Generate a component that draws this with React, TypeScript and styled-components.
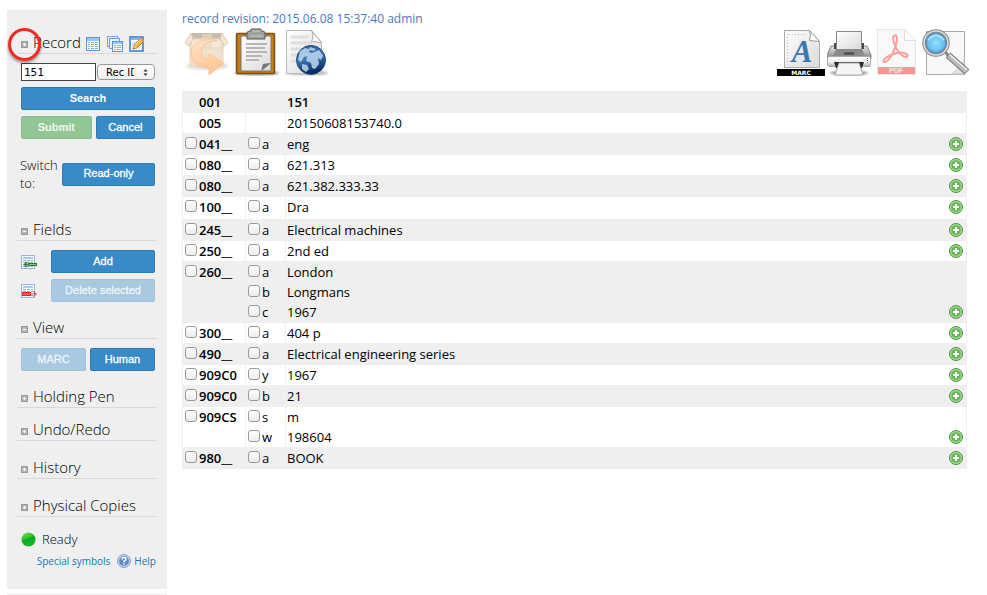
import React from 'react';
import styled, { createGlobalStyle } from 'styled-components';

const GlobalStyle = createGlobalStyle`
  * { box-sizing: border-box; }
  body {
    margin: 0;
    background: #fff;
    color: #000;
    font-family: 'Open Sans', 'Noto Sans', sans-serif;
    font-size: 13px;
  }
  svg { display: block; flex: none; }
`;

const Page = styled.div`
  display: flex;
  align-items: flex-start;
  gap: 15px;
  padding: 10px 20px 0 7px;
`;

const SideColumn = styled.div`
  flex: 0 0 160px;
`;

const Sidebar = styled.aside`
  background: #efefef;
  padding: 20px 10px 19px;
`;

const NextPanel = styled.div`
  height: 1px;
  margin-top: 5px;
  background: #efefef;
`;

const Section = styled.section<{ $gap: number }>`
  margin-bottom: ${(p) => p.$gap}px;
`;

const Heading = styled.header`
  position: relative;
  display: flex;
  align-items: center;
  height: 24px;
  padding-left: 4px;
  border-bottom: 1px solid #d8d8d8;
`;

const Title = styled.h2`
  margin: 0 4px 0 5px;
  font-size: 15px;
  font-weight: 300;
  line-height: 20px;
  white-space: nowrap;
`;

const Toggle = styled.button`
  display: flex;
  margin-top: 6px;
  padding: 0;
  border: 0;
  background: none;
`;

const IconButton = styled.button`
  display: flex;
  padding: 0;
  border: 0;
  background: none;
`;

const HeadingTools = styled.div`
  display: flex;
  gap: 6px;
  padding-top: 5px;
`;

const Marker = styled.span`
  position: absolute;
  left: -9px;
  top: -2px;
  width: 33px;
  height: 33px;
  border: 3px solid #f02a23;
  border-radius: 50%;
  box-shadow: 0 2px 3px rgba(0, 0, 0, 0.4);
  pointer-events: none;
`;

const Controls = styled.div`
  display: flex;
  flex-direction: column;
  gap: 6px;
  padding: 9px 2px 0 4px;
`;

const Row = styled.div<{ $gap?: number }>`
  display: flex;
  align-items: center;
  gap: ${(p) => p.$gap ?? 0}px;
`;

const SearchInput = styled.input`
  width: 75px;
  height: 18px;
  padding: 0 2px;
  border: 1px solid #444;
  border-radius: 0;
  background: #fff;
  font: 11px 'DejaVu Sans Mono', monospace;
`;

const SelectWrap = styled.div`
  position: relative;
  flex: 1;
  svg {
    position: absolute;
    right: 7px;
    top: 5px;
    pointer-events: none;
  }
`;

const Select = styled.select`
  display: block;
  width: 100%;
  height: 16px;
  padding: 0 20px 0 8px;
  appearance: none;
  border: 1px solid #999;
  border-radius: 4px;
  background: linear-gradient(#fff, #f0f0f0);
  color: #000;
  font: 10px 'DejaVu Sans', sans-serif;
`;

const tones = {
  primary: { bg: '#398bc7', edge: '#2d7ab5', fg: '#fff' },
  muted: { bg: '#a9c9e1', edge: '#9fc1db', fg: '#eef5fa' },
  success: { bg: '#92c795', edge: '#8abf8d', fg: '#eef8ee' },
};

const Button = styled.button<{ $tone?: keyof typeof tones; $grow?: number; $strong?: boolean }>`
  flex: ${(p) => p.$grow ?? 1} 1 0;
  height: 23px;
  padding: 0 0 2px;
  border: 1px solid ${(p) => tones[p.$tone ?? 'primary'].edge};
  border-radius: 2px;
  background: ${(p) => tones[p.$tone ?? 'primary'].bg};
  color: ${(p) => tones[p.$tone ?? 'primary'].fg};
  font: ${(p) => (p.$strong ? 'bold' : 'normal')} 11px 'Liberation Sans', Arial, sans-serif;
  -webkit-text-stroke: ${(p) => (p.$strong ? 0 : '0.3px')};
  white-space: nowrap;
`;

const SwitchRow = styled.div`
  display: grid;
  grid-template-columns: 42px 1fr;
  align-items: center;
  margin-top: 17px;
  padding: 0 2px 0 3px;
  line-height: 18px;
  font-weight: 300;
`;

const Status = styled.div`
  display: flex;
  align-items: center;
  gap: 6px;
  padding-left: 4px;
  font-weight: 300;
  line-height: 20px;
`;

const Links = styled.nav`
  display: flex;
  justify-content: flex-end;
  align-items: center;
  margin-top: 3px;
  padding-right: 1px;
  gap: 7px;
  font-size: 10px;
  line-height: 18px;
  a {
    display: flex;
    align-items: center;
    gap: 3px;
    color: #1279c0;
    text-decoration: none;
    white-space: nowrap;
  }
`;

const Main = styled.main`
  flex: 1;
  min-width: 0;
`;

const Revision = styled.a`
  display: block;
  margin-bottom: -2px;
  color: #4a78bf;
  font-size: 12px;
  line-height: 18px;
  text-decoration: none;
`;

const Toolbar = styled.div`
  display: flex;
  justify-content: space-between;
  height: 50px;
  margin: 0 -3px 15px 0;
`;

const ToolGroup = styled.div`
  display: flex;
  gap: 1px;
`;

const RecordTable = styled.table`
  width: 100%;
  border-collapse: collapse;
  border: 1px solid #efefef;
  line-height: 20px;
  td, th {
    padding: 0;
    text-align: left;
    vertical-align: top;
    border: 1px solid #efefef;
  }
  td + td + td { border-right: 0; }
`;

const RecordRow = styled.tr<{ $shade: boolean; $tall?: boolean }>`
  height: ${(p) => (p.$tall ? 23 : 21)}px;
  background: ${(p) => (p.$shade ? '#efefef' : '#fff')};
`;

const TagCell = styled.th`
  width: 63px;
  font-weight: 600;
`;

const CodeCell = styled.td`
  width: 40px;
`;

const CheckLabel = styled.label<{ $inset?: boolean }>`
  display: flex;
  align-items: flex-start;
  height: 20px;
  padding-left: ${(p) => (p.$inset ? 16 : 2)}px;
`;

const Check = styled.input`
  appearance: none;
  width: 12px;
  height: 12px;
  margin: 3px 2px 0 0;
  border: 1px solid #9a9a9a;
  border-radius: 3px;
  background: linear-gradient(#fff, #ececec);
  flex: none;
`;

const Line = styled.div<{ $bold: boolean }>`
  display: flex;
  align-items: center;
  justify-content: space-between;
  height: 20px;
  padding: 0 3px 0 1px;
  font-weight: ${(p) => (p.$bold ? 600 : 400)};
`;

const ToggleIcon = ({ open }: { open: boolean }) => (
  <svg width="7" height="7" viewBox="0 0 7 7" shapeRendering="crispEdges">
    <rect x="0.5" y="0.5" width="6" height="6" fill="#b4b4b4" stroke="#9a9a9a" />
    <path d={open ? 'M2 3.5h3' : 'M2 3.5h3M3.5 2v3'} stroke="#fff" />
  </svg>
);

const TableIcon = () => (
  <svg width="16" height="16" viewBox="0 0 16 16">
    <rect x="1.5" y="1.5" width="13" height="13" fill="#f5fbff" stroke="#5b94d6" />
    <rect x="2" y="2" width="12" height="3" fill="#95c8f2" />
    <path d="M3 6.5h2M6 6.5h3M10 6.5h3M3 8.5h2M6 8.5h3M10 8.5h3M3 10.5h2M6 10.5h3M10 10.5h3M3 12.5h2M6 12.5h3M10 12.5h3" stroke="#8cb0a4" />
  </svg>
);

const CopiesIcon = () => (
  <svg width="16" height="16" viewBox="0 0 16 16">
    <rect x="0.5" y="0.5" width="10" height="10" fill="#e4f2fd" stroke="#7aabdf" />
    <rect x="2.5" y="2.5" width="10" height="10" fill="#e4f2fd" stroke="#6da3dd" />
    <rect x="5.5" y="5.5" width="10" height="10" fill="#f7fcff" stroke="#5b94d6" />
    <path d="M6 7h9" stroke="#95c8f2" strokeWidth="2" />
    <path d="M7 9.5h2M10 9.5h4M7 11.5h2M10 11.5h4M7 13.5h2M10 13.5h4" stroke="#91b3aa" />
  </svg>
);

const EditIcon = () => (
  <svg width="16" height="16" viewBox="0 0 16 16">
    <rect x="1" y="1" width="13" height="14" fill="#f5faff" stroke="#3979c6" strokeWidth="1.5" />
    <path d="M2 3h11" stroke="#82b9ed" strokeWidth="2" />
    <path d="M3 7h6M3 9h4" stroke="#b5cfe8" />
    <path d="M4 13l1-4 7-7 3 3-7 7z" fill="#f7b640" stroke="#a67024" strokeWidth="0.8" />
    <path d="M11 3l3 3 1.5-1.5-3-3z" fill="#ee8a68" />
    <path d="M4 13l1-3.5 2.5 2.5z" fill="#e8d0a8" />
    <path d="M4 13l.5-1.5 1 1z" fill="#333" />
    <path d="M6 9l6-6" stroke="#fde28b" />
  </svg>
);

const FieldIcon = ({ remove = false }: { remove?: boolean }) => (
  <svg width="16" height="16" viewBox="0 0 16 16">
    <rect x="0.5" y="1.5" width="13" height="13" fill="#f4faff" stroke="#9ab4dc" />
    <rect x="2" y="3" width="10" height="2" fill="#a3cbef" />
    <path d="M2 6.5h3M6 6.5h3M10 6.5h2M2 8.5h3M6 8.5h3M10 8.5h2M2 10.5h3M6 10.5h3M2 12.5h3M6 12.5h3M10 12.500h2" stroke="#93b2a8" />
    {remove ? (
      <>
        <rect x="1.500" y="9.500" width="8" height="3" fill="#ee5656" stroke="#d92e2e" />
        <path d="M10 11h5.500M12.500 8.500L15 11l-2.500 2.500" fill="none" stroke="#e25252" strokeWidth="1.200" />
      </>
    ) : (
      <>
        <rect x="7.500" y="9.500" width="8" height="2" fill="#8cc47f" stroke="#2f7d2f" />
        <path d="M7 10.500H3M6 8l-2.500 2.500L6 13" fill="none" stroke="#348234" strokeWidth="1.300" />
      </>
    )}
  </svg>
);

const HelpIcon = () => (
  <svg width="14" height="14" viewBox="0 0 14 14">
    <circle cx="7" cy="7" r="6.4" fill="#d6e4f4" stroke="#6f95c5" />
    <circle cx="7" cy="7" r="5" fill="#5f8cc4" />
    <path d="M5 5.5Q5 3.5 7 3.5T9 5.2Q9 6.3 7 7.2V8.2M7 9.2v1.5" fill="none" stroke="#fff" strokeWidth="1.5" />
  </svg>
);

const ReadyIcon = () => (
  <svg width="15" height="15" viewBox="0 0 15 15">
    <defs>
      <linearGradient id="ready" x2="0.4" y2="1">
        <stop offset="0" stopColor="#72e24c" />
        <stop offset="0.5" stopColor="#2cc02c" />
        <stop offset="0.55" stopColor="#0da824" />
        <stop offset="1" stopColor="#14b52b" />
      </linearGradient>
    </defs>
    <circle cx="7.5" cy="7.5" r="7" fill="url(#ready)" />
  </svg>
);

const PlusIcon = () => (
  <svg width="14" height="14" viewBox="0 0 14 14">
    <circle cx="7" cy="7" r="6.5" fill="#9bd488" stroke="#4f9247" />
    <circle cx="7" cy="7" r="5.2" fill="#66b854" stroke="#b3dfa5" strokeWidth="0.7" />
    <path d="M7 4v6M4 7h6" stroke="#fff" strokeWidth="2" />
  </svg>
);

const ArrowsIcon = () => (
  <svg width="5" height="7" viewBox="0 0 5 7">
    <path d="M2.5 0L4.5 2.5h-4zM2.5 7L4.5 4.5h-4z" fill="#333" />
  </svg>
);

const Defs = () => (
  <defs>
    <linearGradient id="paper" x2="1" y2="1">
      <stop offset="0" stopColor="#fff" />
      <stop offset="1" stopColor="#dadada" />
    </linearGradient>
    <linearGradient id="globe" x2="0.3" y2="1">
      <stop offset="0" stopColor="#245a99" />
      <stop offset="0.5" stopColor="#3c79b8" />
      <stop offset="1" stopColor="#072e62" />
    </linearGradient>
    <radialGradient id="lens">
      <stop offset="0" stopColor="#8ce8ff" />
      <stop offset="0.65" stopColor="#6bbdf0" />
      <stop offset="1" stopColor="#2f6fba" />
    </radialGradient>
    <linearGradient id="metal" x2="0" y2="1">
      <stop offset="0" stopColor="#e4e4e4" />
      <stop offset="0.5" stopColor="#b5b5b5" />
      <stop offset="1" stopColor="#777" />
    </linearGradient>
    <linearGradient id="panel" x2="0" y2="1">
      <stop offset="0" stopColor="#fff" />
      <stop offset="0.6" stopColor="#ececec" />
      <stop offset="1" stopColor="#aaa" />
    </linearGradient>
    <linearGradient id="arrow" x2="0.3" y2="1">
      <stop offset="0" stopColor="#ffe3cb" />
      <stop offset="1" stopColor="#ffc592" />
    </linearGradient>
    <filter id="soft"><feGaussianBlur stdDeviation="1.2" /></filter>
  </defs>
);

const UndoBoxIcon = () => (
  <svg width="49" height="50" viewBox="0 0 49 50">
    <Defs />
    <ellipse cx="25" cy="40" rx="21" ry="4" fill="#ccc" opacity="0.6" filter="url(#soft)" />
    <path d="M8 17h33v23H8z" fill="#efe1cb" stroke="#e3d4bc" />
    <path d="M9 7h31v8H9z" fill="#c9bda9" />
    <path d="M10 13h29l2 9H8z" fill="#f5e8d6" stroke="#e6d6be" />
    <path d="M9 7L3 17l4 3 4-7zM40 7l6 10-4 3-4-7z" fill="#f3e6d2" stroke="#dccbb0" />
    <path d="M20 8h10v14H20z" fill="#ead9c0" opacity="0.6" />
    <path d="M35 15C25 11 9 16 9 27C9 37 17 43 27 42V49L42 37L27 28V33C21 32 18 27 20 22C22 17 29 15 35 15z" fill="url(#arrow)" stroke="#fcc79b" />
  </svg>
);

const ClipboardIcon = () => (
  <svg width="49" height="50" viewBox="0 0 49 50">
    <ellipse cx="25" cy="47" rx="22" ry="2.5" fill="#999" filter="url(#soft)" />
    <rect x="4.500" y="7.500" width="38" height="40" rx="1" fill="#c17d17" stroke="#785015" strokeWidth="1.5" />
    <path d="M9 10h30v35H9z" fill="url(#paper)" stroke="#80776a" />
    <path d="M39 37L31 38L30 45z" fill="#aaa" />
    <path d="M39 37l-10 8 2-7z" fill="#777" />
    <path d="M14 18h21M14 22h19M14 26h21M14 30h16M14 34h13" stroke="#b6b6b6" strokeWidth="2" />
    <path d="M15 7q0-2 3-2h1V3h10v2h1q3 0 3 2v6H15z" fill="#9ca39b" stroke="#555b54" />
    <path d="M20 5h9M18 10h13" stroke="#c5cbc4" />
  </svg>
);

const WebPageIcon = () => (
  <svg width="49" height="50" viewBox="0 0 49 50">
    <ellipse cx="25" cy="47" rx="21" ry="2" fill="#aaa" filter="url(#soft)" />
    <path d="M4.5 4.5h25l10 12v31h-35z" fill="url(#paper)" stroke="#bcbcbc" />
    <path d="M9 11h18M9 17h21M9 23h20M9 29h16M9 35h11" stroke="#dedede" strokeWidth="3" />
    <path d="M29.5 4.5c2 3 2 6 0 11l10 1z" fill="#fafafa" stroke="#aaa" />
    <circle cx="29" cy="34" r="14.5" fill="url(#globe)" stroke="#244d80" />
    <path d="M18 25l5-3 4 1 1-2 6 2-2 2-4-1-1 2 3 1-3 3-5 1-3 5-3-2zM30 27l7-3 4 6-2 4-3-2 1 6-4 5-3-1-1-5-5-2 1-4zM20 38l5 1 2 4-3 3-4-3z" fill="#bed6ec" opacity="0.85" />
  </svg>
);

const MarcIcon = () => (
  <svg width="49" height="50" viewBox="0 0 49 50">
    <path d="M7.5 4.5h25l10 11v26h-35z" fill="url(#paper)" stroke="#aaa" />
    <path d="M32.5 4.5q2 4 0 10l10 1z" fill="#fff" stroke="#999" />
    <path d="M10.500 8v30M12 8.5h18" fill="none" stroke="#bbb" strokeDasharray="1 2" />
    <text x="25" y="36" textAnchor="middle" fontFamily="Liberation Serif, serif" fontStyle="italic" fontWeight="bold" fontSize="31" fill="#3b76b4">A</text>
    <rect y="43" width="48" height="8" fill="#000" />
    <text x="24" y="49" textAnchor="middle" fontFamily="DejaVu Sans, sans-serif" fontWeight="bold" fontSize="6" fill="#fff">MARC</text>
  </svg>
);

const PrinterIcon = () => (
  <svg width="49" height="50" viewBox="0 0 49 50">
    <ellipse cx="22" cy="47" rx="19" ry="2" fill="#888" filter="url(#soft)" />
    <path d="M4 20h36l4 9v4H0v-4z" fill="url(#metal)" stroke="#888" />
    <path d="M7 17h30v6H7z" fill="#4a4a4a" />
    <path d="M9.5 5.5h25v18h-25z" fill="url(#paper)" stroke="#888" />
    <path d="M9 23h26l3 7H6z" fill="#8a8a8a" />
    <path d="M17 27.500h10" stroke="#444" strokeWidth="2" />
    <rect x="0.500" y="30.500" width="43" height="10" rx="2" fill="url(#panel)" stroke="#aaa" />
    <path d="M7 36h30l-2 6H9z" fill="#2b2b2b" />
    <path d="M12 37h20l4 12H8z" fill="#f5f5f5" stroke="#aaa" />
    <path d="M40.500 32v5" stroke="#666" strokeDasharray="1 1" />
  </svg>
);

const PdfIcon = () => (
  <svg width="44" height="50" viewBox="0 0 44 50">
    <path d="M0.500 3.500h27l11 11v34h-38z" fill="#f9f9f9" stroke="#e6e6e6" />
    <path d="M27.500 3.500v11h11z" fill="#fff" stroke="#e0e0e0" />
    <path d="M17 17C14 8 21 7 20 14C19 22 13 35 8 36C3 36 10 29 20 27C29 25 33 30 29 31C25 31 19 24 17 17z" fill="none" stroke="#f6a19c" strokeWidth="2" />
    <rect x="1" y="41" width="37" height="7" fill="#f49893" />
    <text x="19" y="47" textAnchor="middle" fontFamily="Liberation Sans, sans-serif" fontWeight="bold" fontSize="7" fill="#fde6e4">PDF</text>
  </svg>
);

const PreviewIcon = () => (
  <svg width="48" height="50" viewBox="0 0 48 50">
    <path d="M4.500 5.500h38v43h-38z" fill="#f8f8f8" stroke="#aaa" />
    <path d="M42 34Q38 43 29 48L42 48z" fill="url(#paper)" stroke="#ccc" />
    <path d="M22 25L28 31" stroke="#888" strokeWidth="3" />
    <path d="M26 29L45 46" stroke="#777" strokeWidth="7" />
    <path d="M26.500 29.500L44.500 45.500" stroke="#bbb" strokeWidth="5" />
    <path d="M27.500 28.500L45 44" stroke="#eee" strokeWidth="1.500" />
    <circle cx="14" cy="17" r="12" fill="url(#lens)" stroke="#888" strokeWidth="3.500" />
    <circle cx="14" cy="17" r="12" fill="none" stroke="#ddd" strokeWidth="1.500" />
    <path d="M6 14q8-9 16 0" fill="none" stroke="#e2f7ff" strokeWidth="2" opacity="0.6" />
  </svg>
);

type Subfield = [code: string, value: string];
type Field = { tag: string; subs: Subfield[]; control?: boolean; boldValue?: boolean; tall?: boolean };

const fields: Field[] = [
  { tag: '001', subs: [['', '151']], control: true, boldValue: true },
  { tag: '005', subs: [['', '20150608153740.0']], control: true },
  { tag: '041__', subs: [['a', 'eng']] },
  { tag: '080__', subs: [['a', '621.313']] },
  { tag: '080__', subs: [['a', '621.382.333.33']] },
  { tag: '100__', subs: [['a', 'Dra']], tall: true },
  { tag: '245__', subs: [['a', 'Electrical machines']] },
  { tag: '250__', subs: [['a', '2nd ed']] },
  { tag: '260__', subs: [['a', 'London'], ['b', 'Longmans'], ['c', '1967']] },
  { tag: '300__', subs: [['a', '404 p']] },
  { tag: '490__', subs: [['a', 'Electrical engineering series']] },
  { tag: '909C0', subs: [['y', '1967']] },
  { tag: '909C0', subs: [['b', '21']] },
  { tag: '909CS', subs: [['s', 'm'], ['w', '198604']] },
  { tag: '980__', subs: [['a', 'BOOK']] },
];

type SectionHeadingProps = { title: string; open?: boolean; children?: React.ReactNode };

const SectionHeading = ({ title, open = false, children }: SectionHeadingProps) => (
  <Heading>
    <Toggle aria-label={`Toggle ${title}`} aria-expanded={open}>
      <ToggleIcon open={open} />
    </Toggle>
    <Title>{title}</Title>
    {children}
  </Heading>
);

const MenuPanel = () => (
  <Sidebar>
    <Section $gap={25}>
      <SectionHeading title="Record">
        <HeadingTools>
          <IconButton aria-label="New record"><TableIcon /></IconButton>
          <IconButton aria-label="Clone record"><CopiesIcon /></IconButton>
          <IconButton aria-label="Edit template"><EditIcon /></IconButton>
        </HeadingTools>
        <Marker />
      </SectionHeading>
      <Controls>
        <Row $gap={1}>
          <SearchInput aria-label="Search record" defaultValue="151" />
          <SelectWrap>
            <Select aria-label="Search type"><option>Rec ID</option></Select>
            <ArrowsIcon />
          </SelectWrap>
        </Row>
        <Row><Button $strong>Search</Button></Row>
        <Row $gap={4}>
          <Button $tone="success" $grow={6} $strong>Submit</Button>
          <Button $grow={5}>Cancel</Button>
        </Row>
      </Controls>
      <SwitchRow>
        <span>Switch to:</span>
        <Button>Read-only</Button>
      </SwitchRow>
    </Section>
    <Section $gap={13}>
      <SectionHeading title="Fields" open />
      <Controls>
        <Row $gap={14}><FieldIcon /><Button>Add</Button></Row>
        <Row $gap={14}><FieldIcon remove /><Button $tone="muted">Delete selected</Button></Row>
      </Controls>
    </Section>
    <Section $gap={13}>
      <SectionHeading title="View" open />
      <Controls>
        <Row $gap={4}><Button $tone="muted">MARC</Button><Button>Human</Button></Row>
      </Controls>
    </Section>
    <Section $gap={9}><SectionHeading title="Holding Pen" /></Section>
    <Section $gap={14}><SectionHeading title="Undo/Redo" /></Section>
    <Section $gap={14}><SectionHeading title="History" /></Section>
    <Section $gap={12}><SectionHeading title="Physical Copies" /></Section>
    <Status><ReadyIcon />Ready</Status>
    <Links>
      <a href="#symbols">Special symbols</a>
      <a href="#help"><HelpIcon />Help</a>
    </Links>
  </Sidebar>
);

const FieldRow = ({ field, index }: { field: Field; index: number }) => (
  <RecordRow $shade={index % 2 === 0} $tall={field.tall}>
    <TagCell scope="row">
      <CheckLabel $inset={field.control}>
        {!field.control && <Check type="checkbox" />}
        {field.tag}
      </CheckLabel>
    </TagCell>
    <CodeCell>
      {!field.control && field.subs.map(([code]) => (
        <CheckLabel key={code}><Check type="checkbox" />{code}</CheckLabel>
      ))}
    </CodeCell>
    <td>
      {field.subs.map(([code, value], i) => (
        <Line key={code} $bold={!!field.boldValue}>
          {value}
          {!field.control && i === field.subs.length - 1 && (
            <IconButton aria-label={`Add subfield to ${field.tag}`}><PlusIcon /></IconButton>
          )}
        </Line>
      ))}
    </td>
  </RecordRow>
);

export default function App() {
  return (
    <>
      <GlobalStyle />
      <Page>
        <SideColumn>
          <MenuPanel />
          <NextPanel />
        </SideColumn>
        <Main>
          <Revision href="#revision">record revision: 2015.06.08 15:37:40 admin</Revision>
          <Toolbar>
            <ToolGroup>
              <IconButton aria-label="Restore revision"><UndoBoxIcon /></IconButton>
              <IconButton aria-label="Clipboard"><ClipboardIcon /></IconButton>
              <IconButton aria-label="View web page"><WebPageIcon /></IconButton>
            </ToolGroup>
            <ToolGroup>
              <IconButton aria-label="MARC"><MarcIcon /></IconButton>
              <IconButton aria-label="Print"><PrinterIcon /></IconButton>
              <IconButton aria-label="PDF"><PdfIcon /></IconButton>
              <IconButton aria-label="Preview"><PreviewIcon /></IconButton>
            </ToolGroup>
          </Toolbar>
          <RecordTable>
            <tbody>
              {fields.map((field, i) => <FieldRow key={i} field={field} index={i} />)}
            </tbody>
          </RecordTable>
        </Main>
      </Page>
    </>
  );
}
